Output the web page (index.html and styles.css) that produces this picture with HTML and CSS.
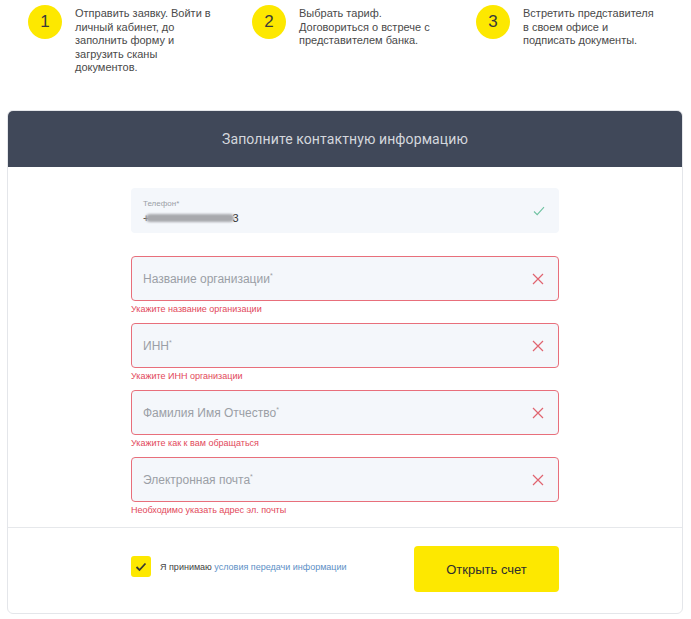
FILE: index.html
```html
<!DOCTYPE html>
<html lang="ru">
<head>
<meta charset="utf-8">
<title>Открыть счет</title>
<link rel="stylesheet" href="styles.css">
</head>
<body>
<div class="steps">
  <div class="step">
    <div class="circle">1</div>
    <div class="step-text">Отправить заявку. Войти в личный кабинет, до заполнить форму и загрузить сканы документов.</div>
  </div>
  <div class="step">
    <div class="circle">2</div>
    <div class="step-text">Выбрать тариф. Договориться о встрече с представителем банка.</div>
  </div>
  <div class="step">
    <div class="circle">3</div>
    <div class="step-text">Встретить представителя в своем офисе и подписать документы.</div>
  </div>
</div>

<div class="card">
  <div class="card-head">Заполните контактную информацию</div>
  <div class="card-body">
    <div class="fields">
      <div class="field field-ok">
        <div class="field-main">
          <div class="field-label">Телефон*</div>
          <div class="field-value"><span class="plus">+</span><span class="blur"></span><span class="last">3</span></div>
        </div>
        <svg class="icon" width="12" height="10" viewBox="0 0 12 10"><path d="M1 5.5 L4.2 8.6 L11 1.2" fill="none" stroke="#6fc2a2" stroke-width="1.1"/></svg>
      </div>

      <div class="group">
        <div class="field field-err">
          <div class="placeholder">Название организации<sup>*</sup></div>
          <svg class="icon" width="12" height="12" viewBox="0 0 12 12"><path d="M1 1 L11 11 M11 1 L1 11" fill="none" stroke="#e0646f" stroke-width="1.2"/></svg>
        </div>
        <div class="error">Укажите название организации</div>
      </div>

      <div class="group">
        <div class="field field-err">
          <div class="placeholder">ИНН<sup>*</sup></div>
          <svg class="icon" width="12" height="12" viewBox="0 0 12 12"><path d="M1 1 L11 11 M11 1 L1 11" fill="none" stroke="#e0646f" stroke-width="1.2"/></svg>
        </div>
        <div class="error">Укажите ИНН организации</div>
      </div>

      <div class="group">
        <div class="field field-err">
          <div class="placeholder">Фамилия Имя Отчество<sup>*</sup></div>
          <svg class="icon" width="12" height="12" viewBox="0 0 12 12"><path d="M1 1 L11 11 M11 1 L1 11" fill="none" stroke="#e0646f" stroke-width="1.2"/></svg>
        </div>
        <div class="error">Укажите как к вам обращаться</div>
      </div>

      <div class="group">
        <div class="field field-err">
          <div class="placeholder">Электронная почта<sup>*</sup></div>
          <svg class="icon" width="12" height="12" viewBox="0 0 12 12"><path d="M1 1 L11 11 M11 1 L1 11" fill="none" stroke="#e0646f" stroke-width="1.2"/></svg>
        </div>
        <div class="error">Необходимо указать адрес эл. почты</div>
      </div>
    </div>
  </div>
  <div class="card-foot">
    <div class="foot-inner">
      <label class="agree">
        <span class="checkbox"><svg width="12" height="10" viewBox="0 0 12 10"><path d="M1.5 5 L4.5 8 L10.5 1.5" fill="none" stroke="#3a3a30" stroke-width="1.8"/></svg></span>
        <span class="agree-text">Я принимаю <a class="link" href="#">условия передачи информации</a></span>
      </label>
      <button class="btn" type="button">Открыть счет</button>
    </div>
  </div>
</div>
</body>
</html>
```

FILE: styles.css
```css
* { box-sizing: border-box; }

body {
  margin: 0;
  background: #ffffff;
  font-family: "Liberation Sans", Arial, sans-serif;
  color: #333;
}

.steps {
  display: flex;
  height: 110px;
  padding: 5px 0 0 28px;
}

.step {
  flex: none;
  width: 224px;
  display: flex;
  gap: 13px;
  align-items: flex-start;
}

.circle {
  width: 34px;
  height: 34px;
  flex: none;
  border-radius: 50%;
  background: #fde800;
  display: flex;
  align-items: center;
  justify-content: center;
  font-size: 17px;
  color: #3a3a3a;
}

.step-text {
  width: 137px;
  font-size: 11px;
  line-height: 13.6px;
  color: #4a4a4a;
  padding-top: 2px;
}

.card {
  margin: 0 8px 0 7px;
  border: 1px solid #e4e6ea;
  border-radius: 6px;
  overflow: hidden;
  background: #fff;
}

.card-head {
  height: 56px;
  background: #404859;
  color: #d4d7dd;
  font-family: Roboto, "Liberation Sans", sans-serif;
  font-size: 14px;
  display: flex;
  align-items: center;
  justify-content: center;
  letter-spacing: 0.1px;
}

.card-body {
  padding: 21px 0 11px;
  border-bottom: 1px solid #e6e8eb;
}

.fields {
  width: 428px;
  margin: 0 auto;
  display: flex;
  flex-direction: column;
  gap: 8px;
}

.field {
  height: 45px;
  border-radius: 4px;
  background: #f4f7fb;
  display: flex;
  align-items: center;
  justify-content: space-between;
  padding: 0 14px 0 12px;
}

.field-ok {
  margin-bottom: 15px;
}

.field-main {
  display: flex;
  flex-direction: column;
  gap: 4px;
  padding-top: 2px;
}

.field-label {
  font-size: 8px;
  color: #9a9ea5;
}

.field-value {
  display: flex;
  align-items: center;
  font-size: 11px;
  color: #333;
  height: 12px;
}

.plus { color: #555; }

.blur {
  display: inline-block;
  width: 88px;
  height: 8px;
  background: #a8a9ad;
  border-radius: 4px;
  filter: blur(1.2px);
  margin-left: -3px;
}

.last { margin-left: -2px; }

.group {
  display: flex;
  flex-direction: column;
}

.field-err {
  border: 1.5px solid #e86f7b;
  padding-left: 11px;
}

.placeholder {
  font-size: 12px;
  color: #9b9fa6;
}

.placeholder sup {
  font-size: 7px;
  vertical-align: 5px;
}

.icon { flex: none; }

.error {
  font-size: 9px;
  line-height: 11px;
  color: #e2485a;
  margin-top: 3px;
}

.card-foot {
  padding: 18px 0 21px;
}

.foot-inner {
  width: 428px;
  margin: 0 auto;
  display: flex;
  align-items: center;
  justify-content: space-between;
}

.agree {
  display: flex;
  align-items: center;
  gap: 9px;
  margin-top: -5px;
}

.checkbox {
  width: 20px;
  height: 21px;
  border-radius: 3px;
  background: #fde800;
  display: flex;
  align-items: center;
  justify-content: center;
}

.agree-text {
  font-size: 9px;
  color: #3f3f3f;
}

.link {
  color: #5d8fc6;
  text-decoration: none;
}

.btn {
  width: 145px;
  height: 46px;
  border: none;
  border-radius: 4px;
  background: #fde800;
  font-family: "Liberation Sans", Arial, sans-serif;
  font-size: 13px;
  color: #2e2e2e;
}
```
